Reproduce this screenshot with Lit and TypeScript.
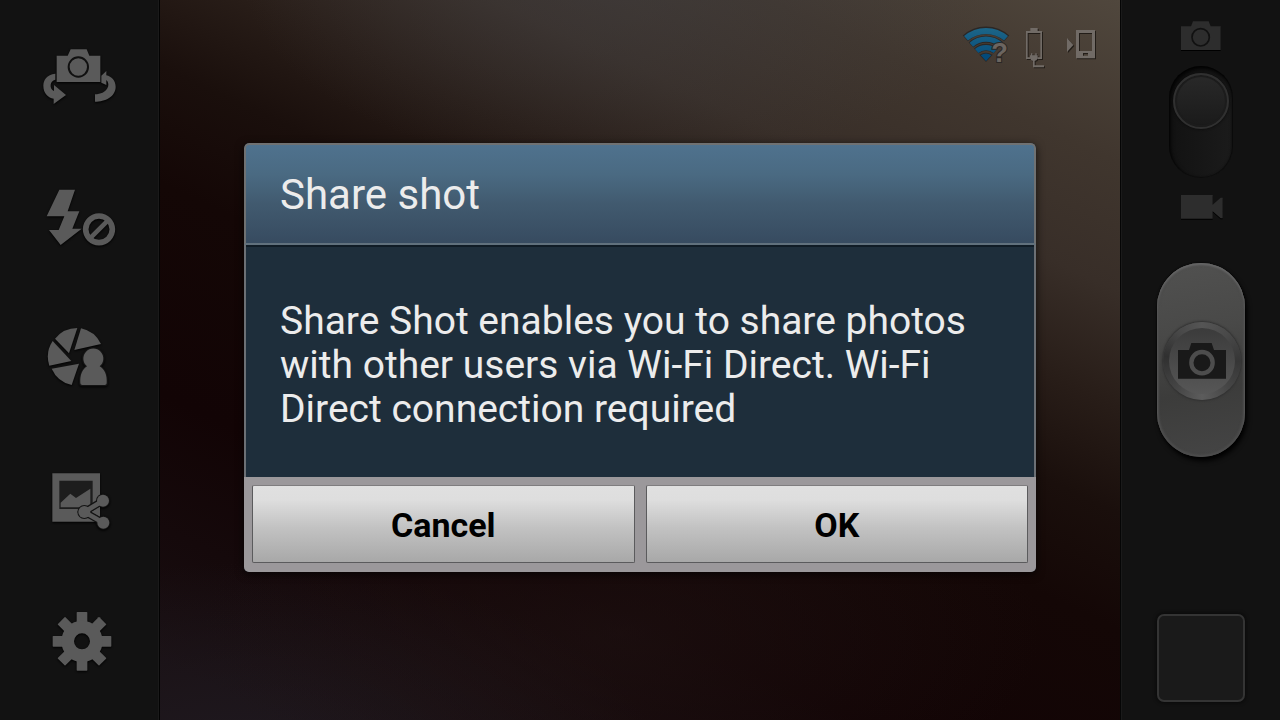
import { LitElement, html, css, svg } from "lit";
import { customElement, state } from "lit/decorators.js";

const gearTeeth = [0, 45, 90, 135, 180, 225, 270, 315];

const icons = {
  flip: svg`
    <path d="M80 77H113L122 58H170L178 77H211V156H80Z"/>
    <circle cx="145" cy="111" r="29" fill="none" stroke="#101010" stroke-width="6"/>
    <path d="M76 131C50 134 40 150 40 167C40 190 55 203 71 206V222L108 195L72 165V183C64 180 61 172 62 164C63 157 67 151 76 149Z"/>
    <path d="M229 123L214 137V158L229 165V150C236 156 237 167 232 175C226 186 212 193 195 193V215C225 215 257 200 257 170C256 150 245 140 229 136Z"/>`,
  flash: svg`
    <path d="M88 44H135L113 109H148L127 161H155L92 210L57 165H86L103 124H50Z"/>
    <circle cx="207" cy="163" r="40" fill="none" stroke="#5a5a5a" stroke-width="17"/>
    <path d="M180 190L234 136" stroke="#5a5a5a" stroke-width="14"/>`,
  mode: svg`
    <path d="M75 71A86 86 0 0 1 142 39L117 115Z"/>
    <path d="M153 40A86 86 0 0 1 213 87L133 105Z"/>
    <path d="M68 78L124 138L58 152A86 86 0 0 1 68 78Z"/>
    <path d="M65 161L147 146L125 210A86 86 0 0 1 65 161Z"/>
    <path d="M151 205C149 180 157 163 171 154A30 30 0 1 1 209 154C224 163 232 180 230 205Q230 210 224 210H157Q151 210 151 205Z" stroke="#141414" stroke-width="8" paint-order="stroke"/>`,
  share: svg`
    <path d="M67 40H210V185H67Z"/>
    <path d="M88 62H188V147H88Z" fill="#1d1d1d"/>
    <path d="M92 142V128L121 101L138 114L181 86V142Z"/>
    <g stroke="#131313" fill="none">
      <path d="M219 122L163 156L220 188" stroke-width="22"/>
      <g stroke-width="8"><circle cx="163" cy="156" r="17"/><circle cx="219" cy="122" r="17"/><circle cx="220" cy="188" r="17"/></g>
    </g>
    <path d="M208 143V168L186 155Z"/>
    <path d="M219 122L163 156L220 188" fill="none" stroke="#5a5a5a" stroke-width="14"/>
    <circle cx="163" cy="156" r="18"/><circle cx="219" cy="122" r="18"/><circle cx="220" cy="188" r="18"/>`,
  settings: svg`
    ${gearTeeth.map((a) => svg`<rect x="140" y="51" width="32" height="45" rx="2" transform="rotate(${a} 156 139)"/>`)}
    <circle cx="156" cy="139" r="43" fill="none" stroke="#5a5a5a" stroke-width="38"/>`,
};

const tools = [
  { label: "Switch camera", box: "0 0 300 270", icon: icons.flip },
  { label: "Flash off", box: "0 -12 300 270", icon: icons.flash },
  { label: "Shooting mode", box: "0 -9 300 270", icon: icons.mode },
  { label: "Share", box: "0 -21 300 270", icon: icons.share },
  { label: "Settings", box: "0 -3 300 270", icon: icons.settings },
];

@customElement("app-root")
export class AppRoot extends LitElement {
  @state() private open = true;

  static styles = css`
    :host {
      display: block;
      font-family: Roboto, "Liberation Sans", sans-serif;
    }
    *, *::before { box-sizing: border-box; }
    svg { display: block; }
    button {
      margin: 0;
      padding: 0;
      border: 0;
      background: none;
      font-family: inherit;
    }
    .screen {
      position: relative;
      display: grid;
      grid-template-columns: 160px 1fr 160px;
      min-height: 100vh;
      background: #121212;
      overflow: hidden;
    }
    .tools {
      display: flex;
      flex-direction: column;
      align-items: center;
      justify-content: space-between;
      padding: 30px 0 36px;
      border-right: 1px solid #020202;
      box-shadow: inset -1px 0 #1a1a1a;
    }
    .tool svg {
      width: 100px;
      height: 90px;
      fill: #5a5a5a;
      filter: drop-shadow(0 1px 1px #000);
    }
    .preview {
      background:
        radial-gradient(ellipse 420px 200px at 48% 88%, rgba(34, 22, 22, 0.5), rgba(34, 22, 22, 0) 100%),
        radial-gradient(ellipse 420px 200px at 8% 106%, rgba(34, 30, 38, 0.7), rgba(30, 24, 30, 0) 100%),
        radial-gradient(ellipse 380px 200px at 48% -4%, rgba(64, 64, 68, 0.5), rgba(64, 60, 62, 0) 100%),
        linear-gradient(205deg, #50473d 0, #40362e 14%, #382e28 25%, #281d18 35%, #1a0f0c 44%, #140706 54%, #120405 72%, #180e11 95%);
    }
    .status {
      display: flex;
      justify-content: flex-end;
      gap: 10px;
      padding: 22px 20px 0 0;
    }
    .status svg { height: 48px; }
    .wifi { width: 50px; }
    .battery { width: 30px; filter: drop-shadow(1px 1px 0 #221d18); }
    .phone { width: 40px; filter: drop-shadow(1px 1px 0 #221d18); }
    .shooting {
      display: flex;
      flex-direction: column;
      align-items: center;
      padding: 20px 0 18px;
      border-left: 1px solid #050505;
      box-shadow: inset 1px 0 #1a1a1a;
    }
    .mode {
      display: flex;
      flex-direction: column;
      align-items: center;
      gap: 14px;
    }
    .mode svg {
      width: 44px;
      height: 32px;
      fill: #2d2d2d;
      filter: drop-shadow(0 1px 0 #000);
    }
    .switch {
      appearance: none;
      display: block;
      margin: 0;
      width: 64px;
      height: 112px;
      padding: 7px 4px;
      border-radius: 32px;
      background: linear-gradient(90deg, #121212, #1b1b1b);
      box-shadow: inset 1px 3px 5px #000, inset 0 0 1px 1px #0e0e0e;
    }
    .switch::before {
      content: "";
      display: block;
      width: 56px;
      height: 56px;
      border: 2px solid #303030;
      border-radius: 50%;
      background: linear-gradient(#292929, #1a1a1a);
      box-shadow: inset 0 0 0 2px #1c1c1c, 0 0 3px #080808;
    }
    .switch:checked::before { margin-top: 42px; }
    .shutter {
      display: flex;
      align-items: center;
      justify-content: center;
      margin-top: 39px;
      padding: 2px 0 0 2px;
      width: 88px;
      height: 194px;
      flex: none;
      border-radius: 44px;
      background: linear-gradient(170deg, #515150, #494948 35%, #3c3c3b 65%, #454545);
      box-shadow: inset 0 2px 2px #666, inset 0 0 2px 2px #4d4d4d, 2px 4px 5px #000, 0 0 2px #000;
    }
    .ring {
      display: grid;
      place-items: center;
      width: 78px;
      height: 78px;
      border-radius: 50%;
      background: conic-gradient(#555, #494949 12%, #363636 25%, #454545 37%, #5c5c5c 50%, #454545 62%, #303030 77%, #494949 90%, #555);
      box-shadow: 0 0 2px 1px #303030;
    }
    .disc {
      display: grid;
      place-items: center;
      width: 66px;
      height: 66px;
      border-radius: 50%;
      background: linear-gradient(#3b3b3b, #575757);
    }
    .disc svg { width: 50px; height: 38px; }
    .thumb {
      width: 88px;
      height: 88px;
      margin-top: auto;
      border: 2px solid #343434;
      border-radius: 7px;
      background: #1a1a1a;
      box-shadow: 0 0 4px #050505;
    }
    .overlay {
      position: absolute;
      inset: 0;
      display: flex;
      align-items: center;
      justify-content: center;
      padding: 0 24px 5px;
    }
    .dialog {
      width: 100%;
      max-width: 792px;
      border-radius: 5px;
      background: #1e2e3b;
      box-shadow: 0 2px 8px rgba(0, 0, 0, 0.7);
      overflow: hidden;
    }
    .title {
      margin: 0;
      padding: 26px 34px 0;
      height: 102px;
      border: 2px solid #6f7172;
      border-bottom-color: #61717d;
      border-radius: 5px 5px 0 0;
      background: linear-gradient(#4f728e, #4a6a82 30%, #415a6f 60%, #374b60);
      color: #ececec;
      font-size: 42px;
      font-weight: 400;
      line-height: 48px;
    }
    .message {
      margin: 0;
      padding: 54px 34px 46px;
      border: solid #6c7075;
      border-width: 0 2px;
      box-shadow: inset 0 2px #101c26;
      color: #ececec;
      font-size: 39px;
      line-height: 44px;
    }
    .actions {
      display: grid;
      grid-template-columns: 1fr 1fr;
      gap: 11px;
      padding: 8px 8px 9px;
      background: #9b989b;
    }
    .action {
      height: 78px;
      padding-top: 2px;
      border: 1px solid #5b5b5d;
      border-top-color: #7f7d7f;
      border-radius: 2px;
      background: linear-gradient(#e0e0e0, #dedede 18%, #c2c2c2 55%, #a8a8a8);
      color: #000;
      font-size: 34px;
      font-weight: 700;
      line-height: 40px;
    }
  `;

  private close() {
    this.open = false;
  }

  render() {
    return html`
      <main class="screen">
        <nav class="tools" aria-label="Camera tools">
          ${tools.map(
            (t) => html`<button class="tool" aria-label=${t.label}>
              <svg viewBox=${t.box}>${t.icon}</svg>
            </button>`
          )}
        </nav>

        <section class="preview">
          <div class="status">
            <svg class="wifi" viewBox="30 21 150 144">
              <defs>
                <linearGradient id="wave" gradientUnits="userSpaceOnUse" x1="0" y1="37" x2="0" y2="138">
                  <stop offset="0" stop-color="#1d6688"/><stop offset="1" stop-color="#044a7a"/>
                </linearGradient>
              </defs>
              <g fill="none" stroke="#2b2725">
                <path d="M46 70A92 92 0 0 1 170 70" stroke-width="23"/>
                <path d="M63 90A67 67 0 0 1 153 90" stroke-width="21"/>
                <path d="M79 108A43 43 0 0 1 137 108" stroke-width="21"/>
                <path d="M108 138L91 120Q108 110 125 120Z" stroke-width="4"/>
              </g>
              <g fill="none" stroke="url(#wave)">
                <path d="M48 70A92 92 0 0 1 168 70" stroke-width="18"/>
                <path d="M64 89A67 67 0 0 1 152 89" stroke-width="16"/>
                <path d="M80 108A43 43 0 0 1 136 108" stroke-width="16"/>
              </g>
              <path d="M108 138L92 121Q108 110 124 121Z" fill="#044a7a"/>
              <text x="149" y="141" text-anchor="middle" font-family="Liberation Sans" font-weight="700" font-size="82" fill="#6b6560" stroke="#2b2725" stroke-width="6" paint-order="stroke">?</text>
            </svg>
            <svg class="battery" viewBox="210 21 90 144">
              <path d="M241 39H263V48H276V132H262V127H271V54H233V127H242V132H228V48H241Z" fill="#716b66"/>
              <path d="M243 115H247V121H256V115H260V121H263V128Q262 135 254 138V151H282V157H249V138Q241 135 240 128V121H243Z" fill="#716b66"/>
            </svg>
            <svg class="phone" viewBox="330 21 120 144">
              <path d="M351 69L370 90L351 111Z" fill="#716b66"/>
              <path fill-rule="evenodd" d="M378 45H435V130H378ZM387 54V108H426V54ZM399 114V122H414V114Z" fill="#716b66"/>
            </svg>
          </div>
        </section>

        <aside class="shooting">
          <div class="mode">
            <svg viewBox="0 0 132 96">
              <path d="M6 19H36L42 4H89L95 19H125V90H6Z"/>
              <circle cx="65" cy="52" r="26" fill="none" stroke="#111" stroke-width="5"/>
            </svg>
            <input class="switch" type="checkbox" role="switch" aria-label="Video mode" />
            <svg viewBox="0 0 132 96">
              <path d="M6 9H101V38L125 17H131V79H125L101 58V80H6Z"/>
            </svg>
          </div>
          <button class="shutter" aria-label="Take picture">
            <span class="ring"><span class="disc">
              <svg viewBox="0 0 150 114">
                <path d="M3 24H36L43 3H104L111 24H147V110H3Z" fill="#191919"/>
                <circle cx="75" cy="62" r="32" fill="none" stroke="#4d4d4d" stroke-width="13"/>
              </svg>
            </span></span>
          </button>
          <button class="thumb" aria-label="Gallery"></button>
        </aside>

        ${this.open
          ? html`<div class="overlay">
              <section class="dialog" role="dialog" aria-modal="true" aria-labelledby="title" aria-describedby="message">
                <h1 class="title" id="title">Share shot</h1>
                <p class="message" id="message">
                  Share Shot enables you to share photos with other users via Wi-Fi Direct. Wi-Fi Direct connection required
                </p>
                <div class="actions">
                  <button class="action" @click=${this.close}>Cancel</button>
                  <button class="action" @click=${this.close}>OK</button>
                </div>
              </section>
            </div>`
          : null}
      </main>
    `;
  }
}
